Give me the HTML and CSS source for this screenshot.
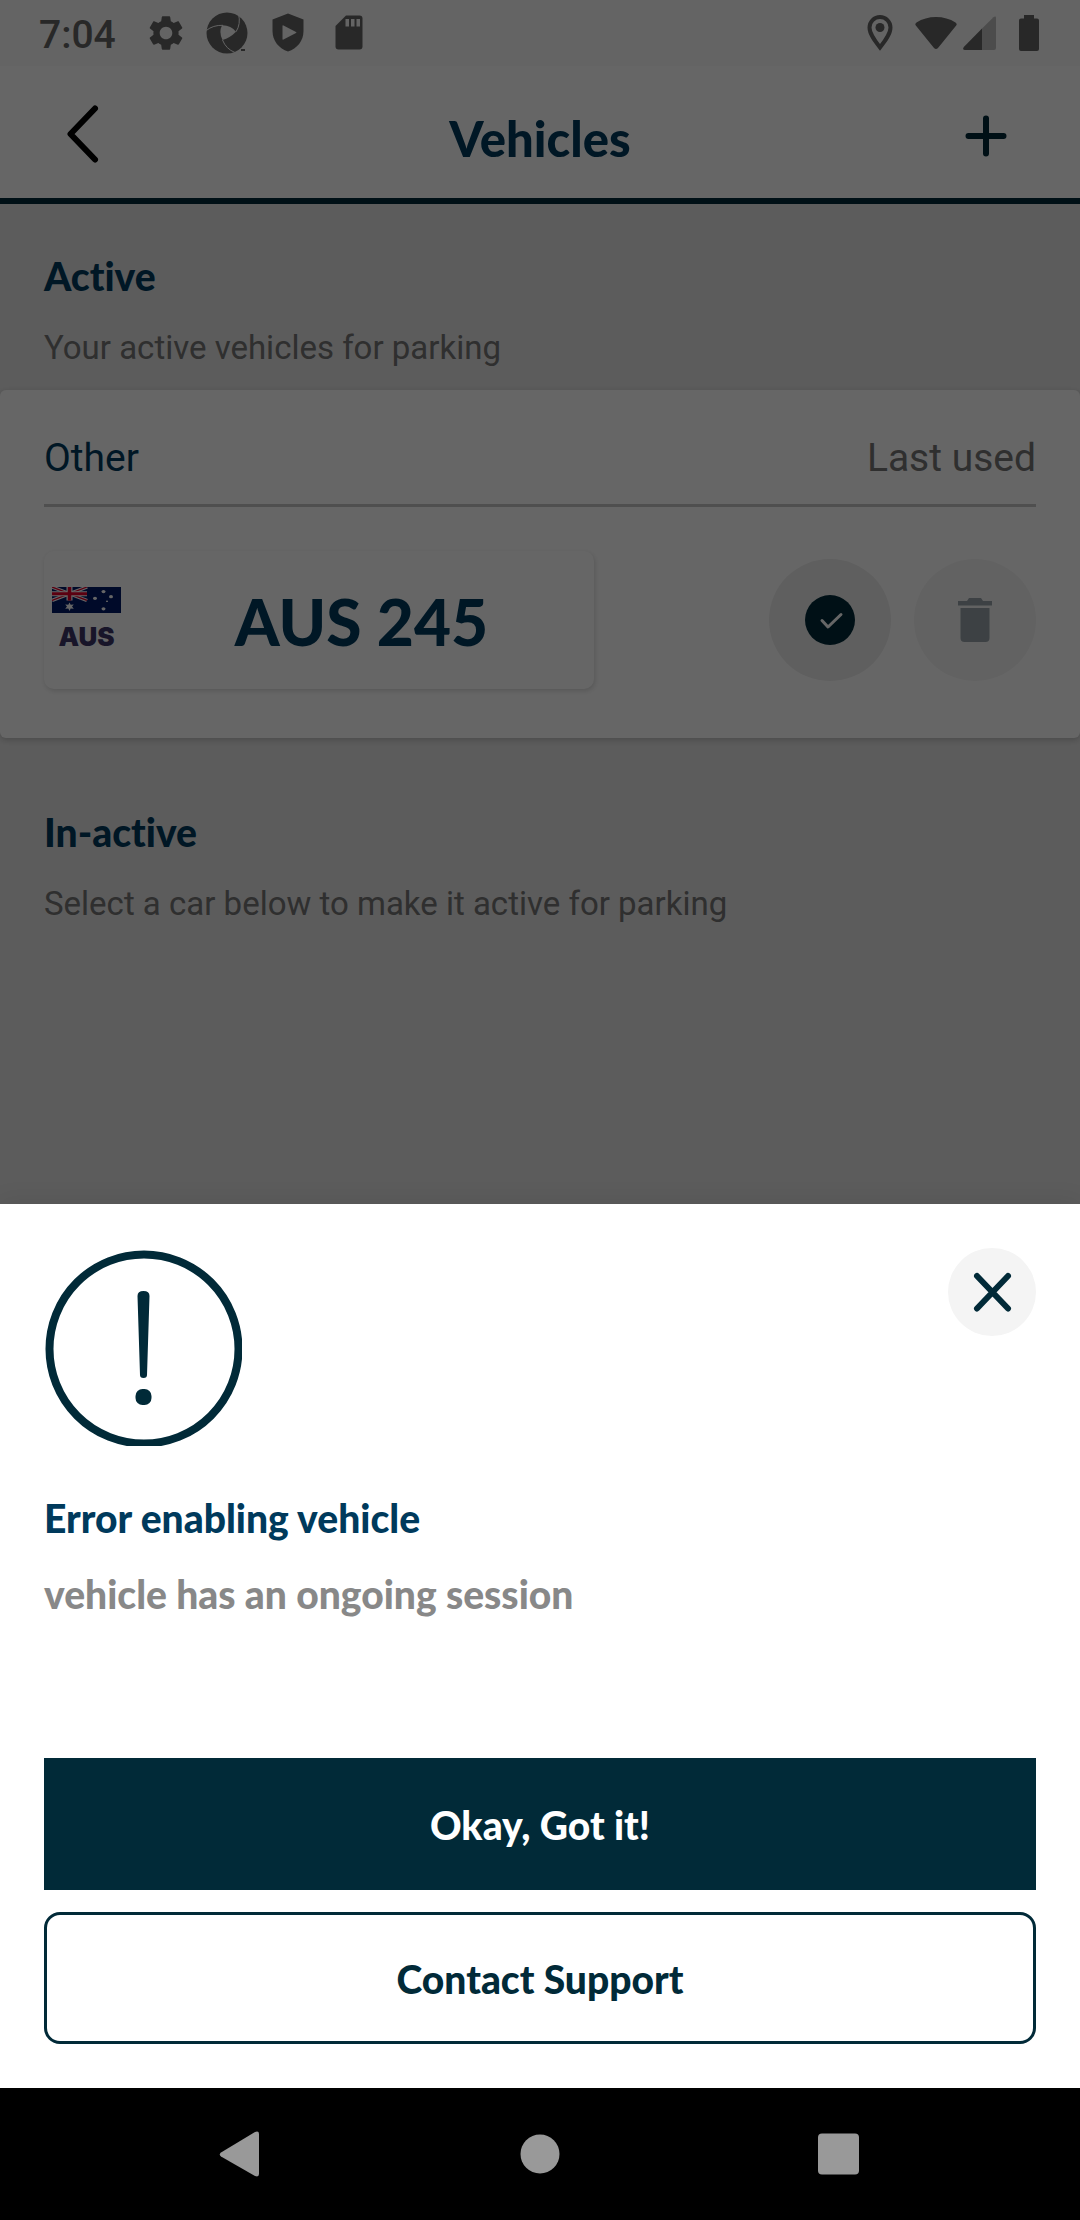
FILE: index.html
```html
<!DOCTYPE html>
<html lang="en">
<head>
<meta charset="utf-8">
<meta name="viewport" content="width=device-width, initial-scale=1">
<title>Vehicles</title>
<link rel="stylesheet" href="styles.css">
</head>
<body>
<div class="app">
  <div class="backdrop">
    <div class="status-bar">
      <div class="status-left">
        <span class="clock">7:04</span>
        <svg class="status-icon" viewBox="0 0 24 24" aria-hidden="true"><path d="M19.14 12.94c.04-.3.06-.61.06-.94 0-.32-.02-.64-.07-.94l2.03-1.58c.18-.14.23-.41.12-.61l-1.92-3.32c-.12-.22-.37-.29-.59-.22l-2.39.96c-.5-.38-1.03-.7-1.62-.94l-.36-2.54c-.04-.24-.24-.41-.48-.41h-3.84c-.24 0-.43.17-.47.41l-.36 2.54c-.59.24-1.13.57-1.62.94l-2.39-.96c-.22-.08-.47 0-.59.22L2.74 8.87c-.12.21-.08.47.12.61l2.03 1.58c-.05.3-.09.63-.09.94s.02.64.07.94l-2.03 1.58c-.18.14-.23.41-.12.61l1.92 3.32c.12.22.37.29.59.22l2.39-.96c.5.38 1.03.7 1.62.94l.36 2.54c.05.24.24.41.48.41h3.84c.24 0 .44-.17.47-.41l.36-2.54c.59-.24 1.13-.56 1.62-.94l2.39.96c.22.08.47 0 .59-.22l1.92-3.32c.12-.22.07-.47-.12-.61l-2.01-1.58zM12 15.6c-1.98 0-3.6-1.62-3.6-3.6s1.62-3.6 3.6-3.6 3.6 1.62 3.6 3.6-1.62 3.6-3.6 3.6z"/></svg>
        <svg class="status-icon" viewBox="0 0 42 42" aria-hidden="true"><circle cx="21" cy="21" r="20.5"/><path class="cut" d="M16 13.2Q25 13 30 19.8Q24 26 16.5 28Q12.500 20 16 13.200Z"/><path class="cut-line" d="M.3 18.500Q7 13 17 13.300M30 19.800Q35 12 32.500 2M16.500 28Q20 37 29 40.500"/><path d="M35 37h4v2h-4z"/></svg>
        <svg class="status-icon" viewBox="0 0 42 42" aria-hidden="true"><path d="M21 1.500 36.500 7.500V19C36.500 29 30 36.500 21 39.500 12 36.500 5.500 29 5.500 19V7.500Z"/><path class="cut" d="M15.500 14Q15.500 13 16.500 13.500L29 20Q30 20.500 29 21L16.500 27.500Q15.500 28 15.500 27Z"/></svg>
        <svg class="status-icon" viewBox="0 0 42 42" aria-hidden="true"><path d="M18 3.500H31.500A3 3 0 0 1 34.500 6.500V34.500A3 3 0 0 1 31.500 37.500H10.500A3 3 0 0 1 7.500 34.500V14Z"/><path class="cut" d="M17.500 7h3.500v7.500h-3.500zM23 7h3.500v7.500H23zM28.500 7H32v7.500h-3.500z"/></svg>
      </div>
      <div class="status-right">
        <svg class="pin-icon" viewBox="0 0 26 36" aria-hidden="true"><path class="pin-line" d="M13 32.500C8 26 2.500 19 2.500 12.500A10.500 10.500 0 0 1 23.500 12.500C23.500 19 18 26 13 32.500Z"/><circle cx="13" cy="12.500" r="4.500"/></svg>
        <div class="network">
          <svg class="wifi-icon" viewBox="0 0 42 34" aria-hidden="true"><path d="M.8 9.500Q-.5 8 1.500 6.500Q10 1 21 1T40.500 6.500Q42.500 8 41.200 9.500L23 32Q21 34 19 32Z"/></svg>
          <svg class="signal-icon" viewBox="0 0 34 34" aria-hidden="true"><path class="faint" d="M19 12.500 30.500 1.200Q33 -.500 33 2V32Q33 34 31 34H19Z"/><path d="M19 12.500V34H2Q-1 34 .8 31Z"/></svg>
        </div>
        <svg class="battery-icon" viewBox="0 0 20 36" aria-hidden="true"><path d="M5 0H15V3.500H18A2 2 0 0 1 20 5.500V34A2 2 0 0 1 18 36H2A2 2 0 0 1 0 34V5.500A2 2 0 0 1 2 3.500H5Z"/></svg>
      </div>
    </div>

    <header class="top-bar">
      <button class="bar-button" type="button" aria-label="Back"><svg class="bar-icon back" viewBox="0 0 60 60" aria-hidden="true"><path d="M37 4.500 12.500 30 37 55.500"/></svg></button>
      <h1 class="page-title">Vehicles</h1>
      <button class="bar-button" type="button" aria-label="Add vehicle"><svg class="bar-icon add" viewBox="0 0 60 60" aria-hidden="true"><path d="M24 14.500V49.500M6.500 32H41.500"/></svg></button>
    </header>

    <main>
      <section class="intro">
        <h2 class="heading">Active</h2>
        <p class="hint">Your active vehicles for parking</p>
      </section>
      <article class="vehicle-card">
        <div class="vehicle-meta"><span class="vehicle-type">Other</span><span class="vehicle-note">Last used</span></div>
        <div class="vehicle-row">
          <div class="plate">
            <div class="country">
              <svg class="flag" viewBox="0 0 69 31" preserveAspectRatio="none" aria-hidden="true">
                <path fill="#001a68" d="M0 0H69V31H0Z"/>
                <path stroke="#fff" stroke-width="4" d="M0 0 35 16M35 0 0 16"/>
                <path stroke="#e4002b" stroke-width="1.500" d="M0 0 35 16M35 0 0 16"/>
                <path stroke="#fff" stroke-width="6" d="M17.500 0V16M0 8H35"/>
                <path stroke="#e4002b" stroke-width="3.500" d="M17.500 0V16M0 8H35"/>
                <path fill="#fff" d="M17.500 18.500 18.700 21.300 21.800 20.800 20 23.300 21.800 25.800 18.700 25.500 17.500 28.500 16.300 25.500 13.200 25.800 15 23.300 13.200 20.800 16.300 21.300Z"/>
                <g fill="#fff"><circle cx="51.500" cy="5.500" r="2"/><circle cx="43" cy="13.500" r="2"/><circle cx="59" cy="11.500" r="2"/><circle cx="55" cy="17" r="1"/><circle cx="51.500" cy="26" r="2"/></g>
              </svg>
              <span class="country-code">AUS</span>
            </div>
            <span class="plate-number">AUS 245</span>
          </div>
          <div class="actions">
            <button class="round-button selected" type="button" aria-label="Active vehicle"><svg class="action-icon" viewBox="0 0 52 52" aria-hidden="true"><circle cx="26" cy="26" r="25" fill="#012a38"/><path d="M18 26.500 24 33 37 20.500" fill="none" stroke="#fff" stroke-width="3" stroke-linecap="round" stroke-linejoin="round"/></svg></button>
            <button class="round-button remove" type="button" aria-label="Delete vehicle"><svg class="action-icon" viewBox="0 0 52 52" aria-hidden="true"><path fill="#98a4aa" d="M9 7H18L20 4H32L34 7H43V11.500H9ZM11.500 14H40.500V44A4 4 0 0 1 36.500 48H15.500A4 4 0 0 1 11.500 44Z"/></svg></button>
          </div>
        </div>
      </article>
      <section class="intro inactive">
        <h2 class="heading">In-active</h2>
        <p class="hint">Select a car below to make it active for parking</p>
      </section>
    </main>
  </div>

  <section class="sheet" role="dialog" aria-labelledby="sheet-title">
    <div class="sheet-top">
      <svg class="alert-icon" viewBox="0 0 198 198" aria-hidden="true"><circle cx="100" cy="101" r="94.500" fill="none" stroke="#012a38" stroke-width="8"/><path fill="#012a38" d="M93.500 48Q93.500 43 99.500 43T105.500 48L103 127Q103 130 99.500 130T96 127Z"/><rect x="91.500" y="141" width="16" height="16" rx="7" fill="#012a38"/></svg>
      <button class="close-button" type="button" aria-label="Close"><svg class="close-icon" viewBox="0 0 40 40" aria-hidden="true"><path d="M5 4 36 36.500M36 4 5 36.500"/></svg></button>
    </div>
    <h2 class="heading sheet-title" id="sheet-title">Error enabling vehicle</h2>
    <p class="heading sheet-text">vehicle has an ongoing session</p>
    <div class="sheet-actions">
      <button class="wide-button primary" type="button">Okay, Got it!</button>
      <button class="wide-button outline" type="button">Contact Support</button>
    </div>
  </section>

  <nav class="system-nav" aria-label="System">
    <button class="nav-button" type="button" aria-label="Back"><svg class="nav-icon" viewBox="0 0 48 48" aria-hidden="true"><path d="M5 22.500 39 2Q43 .5 43 4V44Q43 47.500 39 46L5 26.500Q2.500 24.500 5 22.500Z"/></svg></button>
    <button class="nav-button" type="button" aria-label="Home"><svg class="nav-icon" viewBox="0 0 48 48" aria-hidden="true"><circle cx="24" cy="24" r="19.500"/></svg></button>
    <button class="nav-button" type="button" aria-label="Recent apps"><svg class="nav-icon" viewBox="0 0 48 48" aria-hidden="true"><rect x="2" y="3.500" width="41" height="41" rx="4"/></svg></button>
  </nav>
</div>
</body>
</html>
```

FILE: styles.css
```css
:root {
  --ink: #012a38;
  --title: #003a5c;
  --muted: #757575;
}

* { box-sizing: border-box; }

body {
  margin: 0;
  background: #000;
  font-family: Roboto, "Liberation Sans", sans-serif;
  font-variant-ligatures: none;
}

h1, h2, p { margin: 0; }

button {
  padding: 0;
  border: 0;
  background: none;
  font: inherit;
  color: inherit;
}

svg { display: block; flex: none; }

.app {
  display: flex;
  flex-direction: column;
  min-height: 100vh;
}

/* Page behind the sheet, dimmed by a scrim */
.backdrop {
  position: relative;
  flex: 1;
  background: #e6e6e6;
}

.backdrop::after {
  content: "";
  position: absolute;
  inset: 0;
  background: rgba(0, 0, 0, .6);
}

.status-bar {
  display: flex;
  justify-content: space-between;
  align-items: center;
  height: 66px;
  padding: 0 41px 0 39px;
  background: #fafafa;
  color: #646464;
  fill: currentColor;
}

.status-left { display: flex; align-items: center; gap: 19px; }
.status-right { display: flex; align-items: center; gap: 22px; }
.network { display: flex; align-items: center; gap: 6px; }

.clock {
  margin-right: 10px;
  padding-top: 3px;
  font-size: 39px;
  font-weight: 500;
  line-height: 48px;
}

.status-icon { width: 42px; height: 42px; }
.cut { fill: #fafafa; }
.cut-line { fill: none; stroke: #fafafa; stroke-width: 1; }
.pin-icon { width: 26px; height: 36px; }
.pin-line { fill: none; stroke: currentColor; stroke-width: 4; }
.wifi-icon { width: 42px; height: 34px; }
.signal-icon { width: 34px; height: 34px; }
.faint { opacity: .4; }
.battery-icon { width: 20px; height: 36px; }

.top-bar {
  display: flex;
  justify-content: space-between;
  align-items: center;
  height: 138px;
  padding: 4px 58px 0;
  border-bottom: 6px solid var(--ink);
  background: #fff;
}

.page-title {
  padding-top: 8px;
  font: 900 49px/60px Lato, sans-serif;
  font-variant-ligatures: none;
  color: var(--title);
}

.bar-icon {
  width: 60px;
  height: 60px;
  fill: none;
  stroke-width: 6;
  stroke-linecap: round;
  stroke-linejoin: round;
}

.back { stroke: #000; }
.add { stroke: var(--ink); }

.intro { padding: 48px 44px 22px; }
.inactive { padding-top: 70px; }

.heading {
  font: 900 39px/48px Lato, sans-serif;
  font-variant-ligatures: none;
  color: var(--title);
}

.hint {
  margin-top: 28px;
  font-size: 33px;
  line-height: 40px;
  color: var(--muted);
}

.vehicle-card {
  padding: 44px 44px 49px;
  border-radius: 6px;
  background: #fff;
  box-shadow: 0 2px 6px rgba(0, 0, 0, .2);
}

.vehicle-meta {
  display: flex;
  justify-content: space-between;
  padding-bottom: 22px;
  border-bottom: 3px solid #c6c6c6;
  font-size: 39px;
  line-height: 48px;
}

.vehicle-type { color: var(--title); }
.vehicle-note { color: var(--muted); }

.vehicle-row {
  display: flex;
  justify-content: space-between;
  align-items: center;
  margin-top: 44px;
}

.plate {
  display: flex;
  align-items: center;
  flex: 0 1 550px;
  height: 138px;
  padding: 0 8px;
  border-radius: 10px;
  background: #fff;
  box-shadow: 1px 2px 5px rgba(0, 0, 0, .15);
}

.country {
  display: flex;
  flex-direction: column;
  align-items: center;
  gap: 8px;
}

.flag { width: 69px; height: 26px; }

.country-code {
  font: 900 26px/32px Inter, sans-serif;
  color: #3e3667;
}

.plate-number {
  flex: 1;
  padding: 4px 0 0 16px;
  font: 900 64px/80px Lato, sans-serif;
  text-align: center;
  color: var(--title);
}

.actions { display: flex; gap: 23px; }

.round-button {
  display: grid;
  place-items: center;
  width: 122px;
  height: 122px;
  border-radius: 50%;
}

.selected { background: #ededed; }
.remove { background: #f5f5f5; }
.action-icon { width: 52px; height: 52px; }

.sheet {
  position: relative;
  padding: 44px;
  background: #fff;
  box-shadow: 0 0 24px rgba(0, 0, 0, .1);
}

.sheet-top {
  display: flex;
  justify-content: space-between;
  align-items: flex-start;
}

.alert-icon { width: 198px; height: 198px; }

.close-button {
  display: grid;
  place-items: center;
  width: 88px;
  height: 88px;
  border-radius: 50%;
  background: #f4f4f4;
}

.close-icon {
  width: 40px;
  height: 40px;
  stroke: var(--ink);
  stroke-width: 6;
  stroke-linecap: round;
}

.sheet-title { margin-top: 48px; }
.sheet-text { margin-top: 28px; color: #888; }

.sheet-actions {
  display: flex;
  flex-direction: column;
  gap: 22px;
  margin-top: 140px;
}

.wide-button {
  height: 132px;
  padding-top: 2px;
  font: 900 39px/48px Lato, sans-serif;
}

.primary { background: var(--ink); color: #fff; }

.outline {
  border: 3px solid var(--ink);
  border-radius: 16px;
  color: var(--ink);
}

.system-nav {
  position: relative;
  display: grid;
  grid-template-columns: repeat(3, 1fr);
  height: 132px;
  padding: 0 90px;
  background: #000;
  fill: #999;
}

.nav-button { display: grid; place-items: center; }
.nav-icon { width: 48px; height: 48px; }
```
